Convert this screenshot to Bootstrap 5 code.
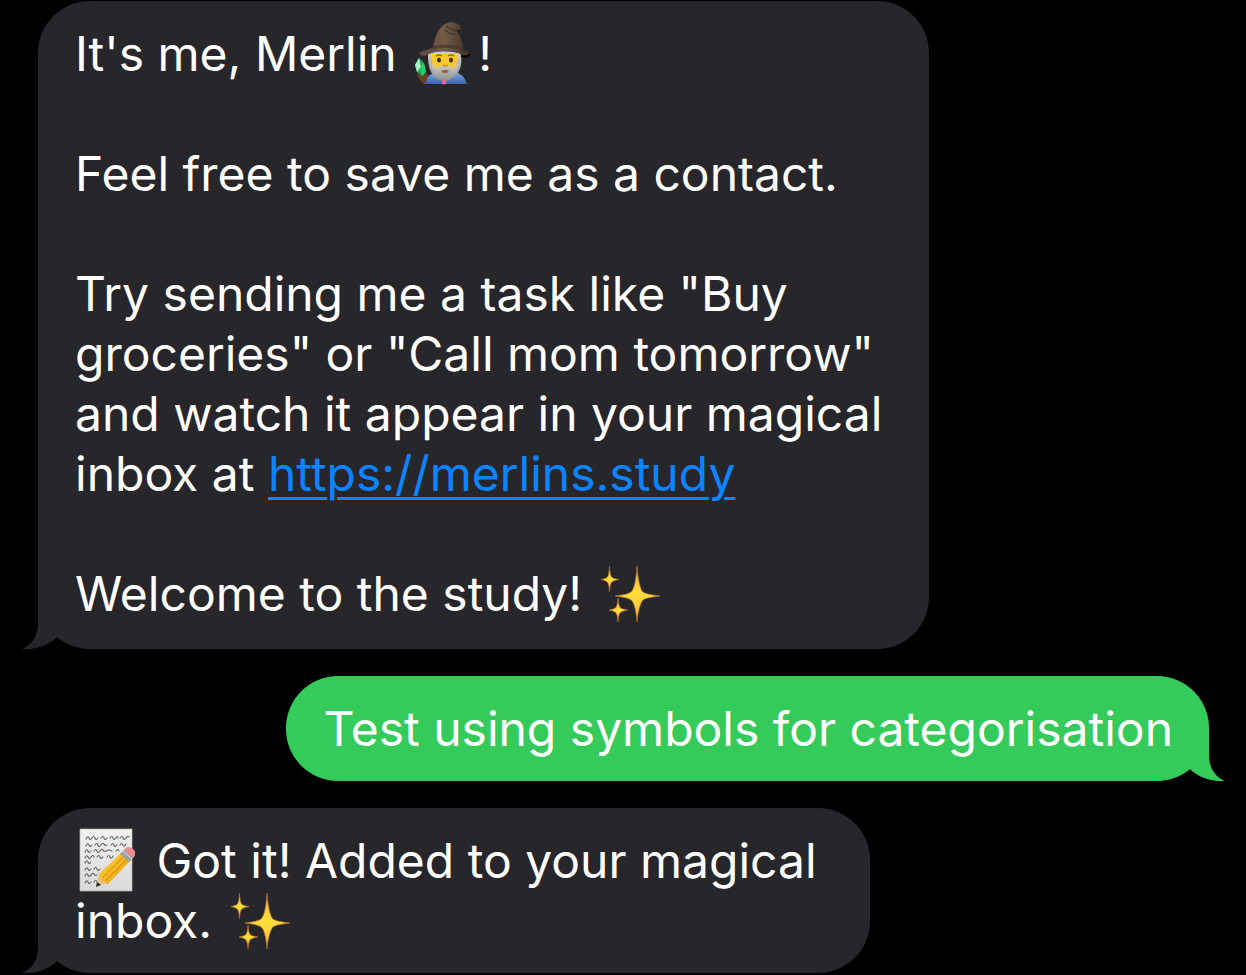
<!DOCTYPE html>
<html lang="en">
<head>
<meta charset="utf-8">
<meta name="viewport" content="width=device-width, initial-scale=1">
<title>Merlin</title>
<link href="https://cdn.jsdelivr.net/npm/bootstrap@5.3.0/dist/css/bootstrap.min.css" rel="stylesheet">
<style>
  body { background: #000; color: #fff; font: 400 48px/60px Inter, "Liberation Sans", sans-serif; overflow-x: hidden; }
  .thread { padding: 1px 37px 0 38px; gap: 27px; }
  .bubble { --fill: #27262b; background: var(--fill); border-radius: 52px; padding: 23px 36px 22px 37px; }
  .bubble p { margin: 0 0 60px; }
  .bubble p:last-child { margin-bottom: 0; }
  .received-long { width: 100%; max-width: 891px; padding-bottom: 25px; }
  .received-short { width: 100%; max-width: 832px; }
  .sent { --fill: #35cb5b; }
  .bubble a { color: #0b84ff; text-decoration-thickness: 3px; text-underline-offset: 6px; }
  .tail { left: -16px; bottom: 0; width: 66px; height: 50px; fill: var(--fill); }
  .sent .tail { left: auto; right: -16px; transform: scaleX(-1); }
  .emoji { width: 60px; height: 64px; margin: -10px 4px; vertical-align: -4px; }
  .emoji-lead { margin-left: 0; margin-right: 8px; }
</style>
</head>
<body>
<svg class="position-absolute" width="0" height="0" aria-hidden="true">
  <defs>
    <linearGradient id="gold" x1="0" y1="0" x2="0" y2="1"><stop offset="0" stop-color="#f2a94a"/><stop offset=".5" stop-color="#ffdf3c"/><stop offset="1" stop-color="#f5b43c"/></linearGradient>
    <linearGradient id="hat" x1="0" x2="1"><stop offset="0" stop-color="#5d4a3a"/><stop offset=".5" stop-color="#725b45"/><stop offset="1" stop-color="#3c3026"/></linearGradient>
    <linearGradient id="beard" x1="0" y1="0" x2="0" y2="1"><stop offset="0" stop-color="#d5d3cf"/><stop offset="1" stop-color="#8d8e8e"/></linearGradient>
    <linearGradient id="robe" x1="0" y1="0" x2="0" y2="1"><stop offset="0" stop-color="#7fb2df"/><stop offset="1" stop-color="#3d5fae"/></linearGradient>
    <linearGradient id="paper" x1="0" y1="0" x2="0" y2="1"><stop offset="0" stop-color="#f2f2f0"/><stop offset="1" stop-color="#d8dad9"/></linearGradient>
    <linearGradient id="wood" x1="0" y1="0" x2="1" y2="1"><stop offset="0" stop-color="#ffd84a"/><stop offset=".5" stop-color="#f6b91f"/><stop offset="1" stop-color="#d58a12"/></linearGradient>
    <symbol id="sparkles" viewBox="0 0 60 64">
      <g fill="url(#gold)" stroke="#b06d2c" stroke-width=".7">
        <path d="M37 5C38 20 41 30 43 31C46 33 52 34 60 35C52 36 46 37 43 39C41 41 38 49 37 61C36 49 34 41 31 39C28 37 23 36 15 35C23 34 28 33 31 31C34 28 36 20 37 5Z"/>
        <path d="M9.500 5Q10 15 12 16.500Q13 17.500 19 18.500Q13 19.500 12 21Q10 22 9.500 31Q9 22 7 21Q6 19.500 1 18.500Q6 17.500 7 16.500Q9 15 9.500 5Z"/>
        <path d="M18 37Q18.500 45 20.500 47Q22 48 28 49Q22 50 20.500 51.500Q18.500 53 18 61Q17.500 53 15.500 51.500Q14 50 9 49Q14 48 15.500 47Q17.500 45 18 37Z"/>
      </g>
    </symbol>
    <symbol id="wizard" viewBox="0 0 60 64">
      <path d="M9 63C12 56 17 52 23 51H41C48 53 51 57 53 63Z" fill="url(#robe)"/>
      <path d="M14 34C14 29 46 29 47 34C48 42 47 50 41 55C35 61 26 61 20 55C15 50 14 42 14 34Z" fill="url(#beard)"/>
      <path d="M18 33H43C44 42 41 49 38 52H24C19 48 17 42 18 33Z" fill="#fbc82e"/>
      <path d="M18 42C19 47 23 48 25 46C28 43 34 43 37 46C39 48 42 47 44 42C44 51 40 59 31 60C22 59 17 51 18 42Z" fill="url(#beard)"/>
      <path d="M22 35Q25 33 28 35M34 35Q37 33 40 35" stroke="#8b6a2d" stroke-width="1.500" fill="none"/>
      <ellipse cx="25" cy="39" rx="2" ry="2.500" fill="#422b16"/><ellipse cx="37" cy="39" rx="2" ry="2.500" fill="#422b16"/>
      <path d="M29 44Q31 46 34 44" stroke="#dd9b1b" stroke-width="2" fill="none"/>
      <path d="M27 50Q31 48 35 50L33 52H29Z" fill="#8e6238"/>
      <path d="M47 32L57 33C54 38 50 37 47 36Z" fill="#080706"/>
      <path d="M5 32C8 29 15 30 19 26C21 18 23 7 31 3C38 -1 46 2 47 7C48 10 43 8 41 9C47 13 49 22 49 29L56 32C53 36 48 34 44 32C34 30 24 29 15 33C10 36 6 35 5 32Z" fill="url(#hat)"/>
      <path d="M19 25C28 23 40 23 48 27L49 30C38 26 28 26 17 29Z" fill="#403328" opacity=".65"/>
      <path d="M32 5Q38 10 43 9M31 9Q37 14 41 13" stroke="#45372b" stroke-width="1.500" fill="none"/>
      <path d="M2 52L6 54 11 51 14 54 12 62H8Z" fill="#694024"/>
      <path d="M5 37L10 42 12 51 8 55 3 51 1 44Z" fill="#20a75a"/><path d="M5 37L7 46 3 51 1 44Z" fill="#a1f1c2"/><path d="M7 46L10 42 12 51 8 55Z" fill="#24d465"/>
      <circle cx="30" cy="61" r="2.500" fill="#df6c9d"/>
    </symbol>
    <symbol id="memo" viewBox="0 0 60 64">
      <path d="M5 1H57V63H5Z" fill="url(#paper)" stroke="#b7b8b6" stroke-width=".7"/>
      <g fill="none" stroke="#62635f" stroke-width="1.100" stroke-linecap="round">
        <path d="M11 11q2-4 3-1t3 0 3 0 3 0m3 0q2-3 3 0t3 0m3 0q2-3 3 0t3 0 2 0m2 0q2-3 3 0t3 0 3-1"/>
        <path d="M11 18q2-4 3-1t3 0m3 0q2-3 3 0t3 0 3-1 3 1m4 0q2-3 3 0t3 0m3 0q2-3 3 0t3-1"/>
        <path d="M10 24q2-4 3-1t3 0m3 0q2-3 3 0t3 0 3-1 3 1 3-1 3 1m4 0q2-3 3 0"/>
        <path d="M10 30q2-4 3-1t3 0 3 0m3 0q2-3 3 0t3 0m4 0q2-3 3 0t3-1"/>
        <path d="M10 35q2-4 3-1t3 0"/>
        <path d="M10 42q2-4 3-1t3 0m3 0q2-3 3 0t3 0"/>
        <path d="M10 48q2-4 3-1t3 0 3-1 3 1"/>
        <path d="M10 55q2-4 3-1t3 0m3 0q2-3 3 0"/>
      </g>
      <path d="M21 59L24 46 32 55Z" fill="#e9bf83"/>
      <path d="M21 59L22 54 26 57Z" fill="#292522"/>
      <path d="M24 46L47 24 56 32 33 56Q31 57 30 53Q26 54 27 50Q24 50 24 46Z" fill="url(#wood)"/>
      <path d="M27 50L50 27M30 53L53 30" stroke="#c77d0b" stroke-width=".8"/>
      <path d="M45 26L50 21 59 29 54 34Z" fill="#9ba2a5"/><path d="M48 23L57 31" stroke="#d9dddd"/>
      <path d="M49 22C51 18 56 18 59 22C62 25 60 28 58 30Z" fill="#ee8c91"/>
    </symbol>
    <symbol id="tail-shape" viewBox="0 0 66 50">
      <path d="M16 0V24C16 37 10 46 0 50C14 51 27 46 35 38L50 20V0Z"/>
    </symbol>
  </defs>
</svg>
<main class="thread d-flex flex-column">
  <article class="bubble received-long position-relative">
    <svg class="tail position-absolute" aria-hidden="true"><use href="#tail-shape"/></svg>
    <div class="position-relative">
      <p>It's me, Merlin <svg class="emoji" role="img" aria-label="Wizard"><use href="#wizard"/></svg>!</p>
      <p>Feel free to save me as a contact.</p>
      <p>Try sending me a task like "Buy groceries" or "Call mom tomorrow" and watch it appear in your magical inbox at <a href="https://merlins.study">https://merlins.study</a></p>
      <p>Welcome to the study! <svg class="emoji" role="img" aria-label="Sparkles"><use href="#sparkles"/></svg></p>
    </div>
  </article>
  <article class="bubble sent align-self-end position-relative">
    <svg class="tail position-absolute" aria-hidden="true"><use href="#tail-shape"/></svg>
    <p class="position-relative">Test using symbols for categorisation</p>
  </article>
  <article class="bubble received-short position-relative">
    <svg class="tail position-absolute" aria-hidden="true"><use href="#tail-shape"/></svg>
    <p class="position-relative"><svg class="emoji emoji-lead" role="img" aria-label="Memo"><use href="#memo"/></svg> Got it! Added to your magical inbox. <svg class="emoji" role="img" aria-label="Sparkles"><use href="#sparkles"/></svg></p>
  </article>
</main>
<script src="https://cdn.jsdelivr.net/npm/bootstrap@5.3.0/dist/js/bootstrap.bundle.min.js"></script>
</body>
</html>
